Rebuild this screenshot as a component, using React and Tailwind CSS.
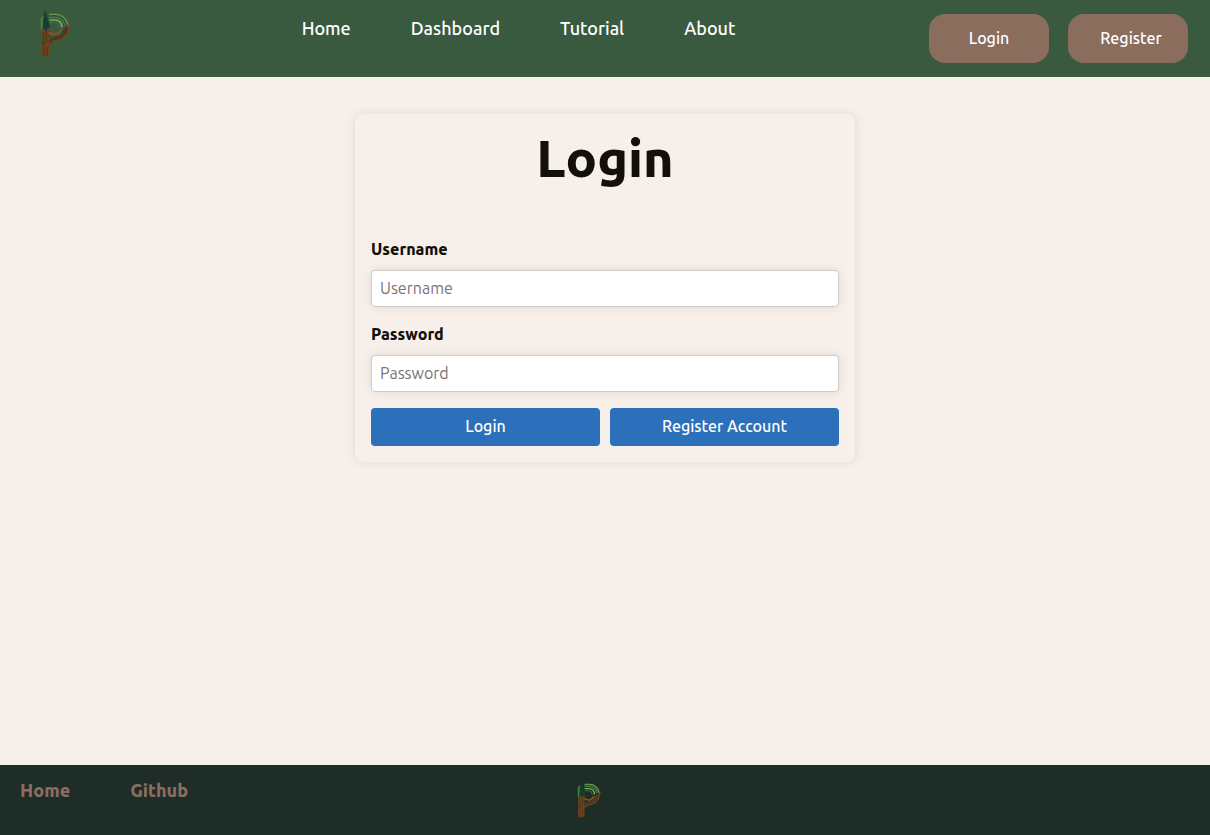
function Logo({ className }) {
  return (
    <svg viewBox="30 27 90 144" className={className} role="img" aria-label="Home page logo" fill="none">
      <path d="M58 48 H76 C94 48 105 60 107 76" stroke="#2c5a38" strokeWidth="12" />
      <path d="M110 80 C110 98 97 114 76 116 C66 117 61 121 58 130" stroke="#4b3120" strokeWidth="12" />
      <path d="M34 92 L58 86 L58 168 L34 168 Z" fill="#74401a" />
      <path d="M41 98 V168 M49 92 V130 M51 142 V168" stroke="#4a2c17" strokeWidth="2" />
      <path d="M44 126 L38 134 M56 140 L46 150" stroke="#28402a" strokeWidth="3" />
      <path d="M58 43 H76 C98 43 109 56 113 74" stroke="#6f9c53" strokeWidth="4" />
      <path d="M58 52 H76 C93 52 101 63 104 77" stroke="#4f8c45" strokeWidth="3" />
      <path d="M58 60 H75 C88 60 95 70 96 82" stroke="#7cab57" strokeWidth="5" />
      <path d="M59 68 H73 C82 68 87 76 87 84" stroke="#376f3d" strokeWidth="4" />
      <path d="M114 79 C116 98 100 119 76 121 C66 122 61 127 59 134" stroke="#7a4018" strokeWidth="4" />
      <path d="M105 83 C103 99 91 111 76 112 C66 113 60 117 58 124" stroke="#683a1c" strokeWidth="4" />
      <path d="M94 88 C88 101 78 103 69 103 L57 97" stroke="#96501e" strokeWidth="6" />
      <path d="M36 129 L54 108 L68 117 L80 107 L88 108 L103 89" stroke="#28503a" strokeWidth="4" />
      <circle cx="115" cy="76" r="4" fill="#9a4d1d" />
      <path d="M32 54 L43 46 L43 90 L33 92 Z" fill="#4c7c40" />
      <path d="M45 29 L51 47 L54 60 L60 82 L53 84 L49 94 L42 88 L37 91 L40 64 L38 65 L42 46 Z" fill="#153d31" />
    </svg>
  );
}

const navLinks = ["Home", "Dashboard", "Tutorial", "About"];
const fields = [
  { id: "username", label: "Username", type: "text" },
  { id: "password", label: "Password", type: "password" },
];

export default function App() {
  return (
    <div className="flex min-h-screen flex-col bg-[#f7efea] font-['Ubuntu','Noto_Sans',sans-serif] text-base leading-5 text-[#130f0a]">
      <header className="flex items-start justify-between bg-[#3a5a40] pr-[22px] pb-3.5 text-white">
        <a href="#home" className="pt-[9px] pr-[38px] pl-10">
          <Logo className="h-12 w-[30px]" />
        </a>
        <nav aria-label="Main" className="flex gap-[60px] pt-[18px] text-lg leading-5 font-medium">
          {navLinks.map((name) => (
            <a key={name} href={"#" + name.toLowerCase()}>{name}</a>
          ))}
        </nav>
        <div className="flex gap-[19px] pt-3.5 font-medium">
          <button type="button" className="h-[49px] w-[120px] rounded-2xl bg-[#8b6d5e] pb-0.5">Login</button>
          <button type="button" className="h-[49px] w-[120px] rounded-2xl bg-[#8b6d5e] pb-0.5 pl-1.5">Register</button>
        </div>
      </header>

      <main className="flex-1 px-4 pt-[37px] pb-8">
        <form className="mx-auto flex max-w-[500px] flex-col rounded-lg p-4 shadow-[0_0_10px_rgba(0,0,0,0.1)]">
          <h1 className="mb-[52px] text-center text-[52px] leading-[56px] font-extrabold">Login</h1>
          {fields.map((field) => (
            <div key={field.id} className="mb-4 flex flex-col">
              <label htmlFor={field.id} className="mb-2.5 leading-[22px] font-extrabold">{field.label}</label>
              <input
                id={field.id}
                type={field.type}
                placeholder={field.label}
                className="h-[37px] w-full rounded border border-[#cccccc] bg-white px-2 pb-0.5 shadow-[0_0_10px_rgba(0,0,0,0.1)] placeholder:text-[#757575]"
              />
            </div>
          ))}
          <div className="flex gap-2.5 font-medium text-white">
            <button type="submit" className="h-[38px] flex-1 rounded bg-[#2c6fbb] pb-0.5">Login</button>
            <button type="button" className="h-[38px] flex-1 rounded bg-[#2c6fbb] pb-0.5">Register Account</button>
          </div>
        </form>
      </main>

      <footer className="grid grid-cols-[1fr_auto_1fr] bg-[#1e2d28] pr-8 pb-[17px]">
        <nav aria-label="Footer" className="flex gap-[60px] pt-[15px] pl-5 text-lg leading-5 font-extrabold text-[#8b6d5e]">
          <a href="#home">Home</a>
          <a href="#github">Github</a>
        </nav>
        <Logo className="mt-[15px] h-[38px] w-6" />
      </footer>
    </div>
  );
}
